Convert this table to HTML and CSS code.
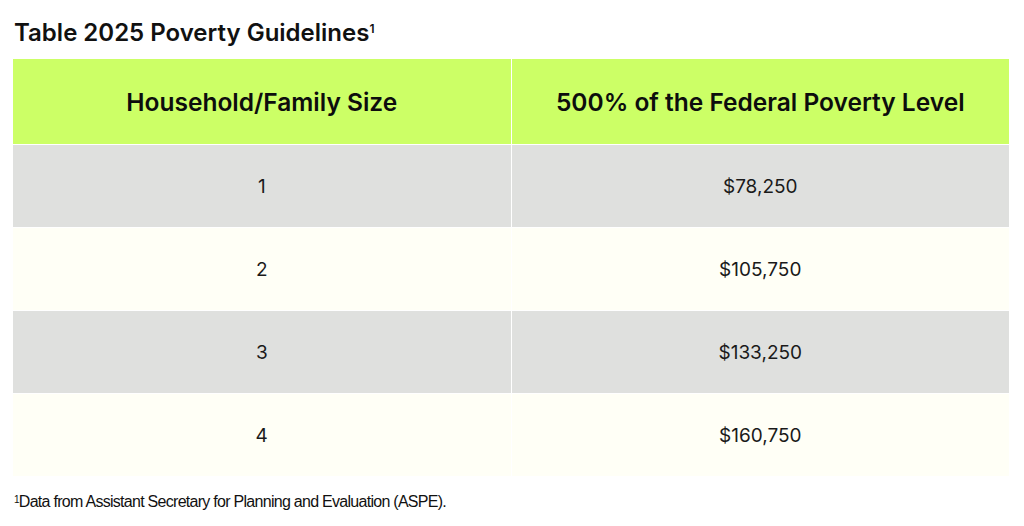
FILE: index.html
```html
<!DOCTYPE html>
<html lang="en">
<head>
<meta charset="utf-8">
<title>Table 2025 Poverty Guidelines</title>
<link rel="stylesheet" href="styles.css">
</head>
<body>
<div class="wrap">
  <h2 class="title">Table 2025 Poverty Guidelines<sup>1</sup></h2>
  <table class="grid">
    <thead>
      <tr><th>Household/Family Size</th><th>500% of the Federal Poverty Level</th></tr>
    </thead>
    <tbody>
      <tr class="gray"><td>1</td><td>$78,250</td></tr>
      <tr class="cream"><td>2</td><td>$105,750</td></tr>
      <tr class="gray"><td>3</td><td>$133,250</td></tr>
      <tr class="cream"><td>4</td><td>$160,750</td></tr>
    </tbody>
  </table>
  <p class="note"><sup>1</sup>Data from Assistant Secretary for Planning and Evaluation (ASPE).</p>
</div>
</body>
</html>
```

FILE: styles.css
```css
html, body {
  margin: 0;
  padding: 0;
  background: #ffffff;
}
body {
  font-family: "Inter", "Liberation Sans", sans-serif;
  color: #111111;
}
.wrap {
  width: 996px;
  padding: 0 0 0 13px;
}
.title {
  margin: 0;
  padding: 19px 0 0 1px;
  height: 59px;
  box-sizing: border-box;
  font-size: 24px;
  font-weight: 600;
  line-height: 28px;
  color: #111;
}
.title sup {
  font-size: 12px;
  vertical-align: top;
  line-height: 12px;
  position: relative;
  top: 4px;
}
.grid {
  width: 996px;
  border-collapse: collapse;
  table-layout: fixed;
}
.grid th, .grid td {
  width: 50%;
  text-align: center;
  border: 1.5px solid #ffffff;
  padding: 0;
}
.grid th {
  background: #ccff66;
  height: 85px;
  font-size: 24.5px;
  font-weight: 600;
  color: #0d0d0d;
}
.grid td {
  height: 82px;
  font-size: 19px;
  font-weight: 400;
  color: #1a1a1a;
}
.gray td { background: #dfe0de; }
.cream td { background: #fffff6; }
.grid tr > :first-child { border-left: none; }
.grid tr > :last-child { border-right: none; }
.grid thead th { border-top: none; }
.grid tbody tr:last-child td { border-bottom: none; }
.note {
  margin: 17px 0 0 1px;
  font-family: "Liberation Sans", sans-serif;
  font-size: 16px;
  letter-spacing: -0.72px;
  color: #111;
}
.note sup {
  font-size: 10px;
  vertical-align: top;
  line-height: 10px;
  position: relative;
  top: 2px;
}
```
